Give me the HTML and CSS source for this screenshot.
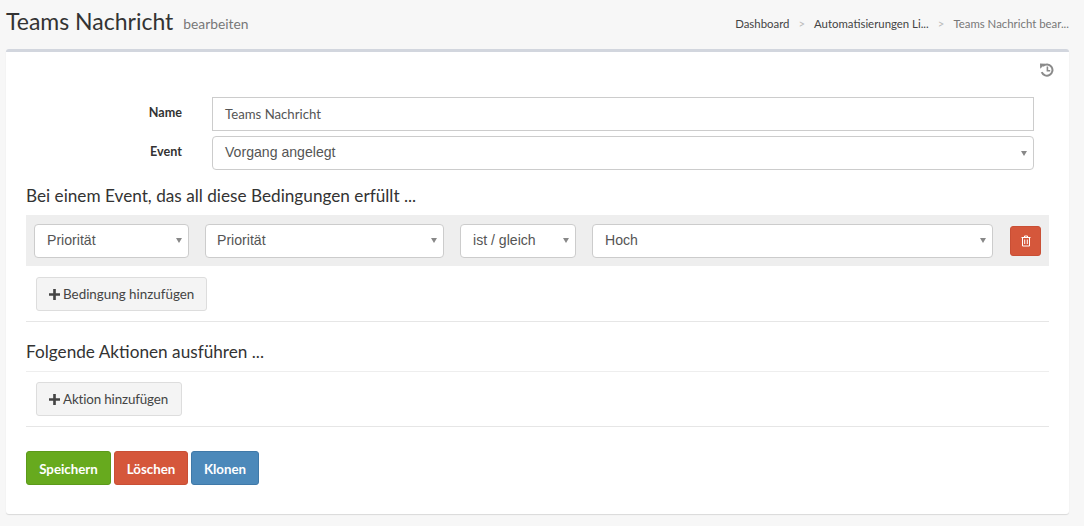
FILE: index.html
```html
<!DOCTYPE html>
<html lang="de">
<head>
<meta charset="utf-8">
<title>Teams Nachricht</title>
<link rel="stylesheet" href="styles.css">
</head>
<body>
<header class="page-head">
  <h1 class="title">Teams Nachricht <small class="subtitle">bearbeiten</small></h1>
  <nav class="crumbs">
    <a>Dashboard</a><span class="sep">&gt;</span><a>Automatisierungen Li...</a><span class="sep">&gt;</span><span class="current">Teams Nachricht bear...</span>
  </nav>
</header>
<main class="card">
  <div class="tools">
    <svg class="history" viewBox="0 0 14 14" width="14" height="14"><path d="M2.9 3.1A5.6 5.6 0 1 1 1.7 9.2" fill="none" stroke="#8a8a8a" stroke-width="2"/><path d="M0 0.6L5.4 0.8 0.2 5.8Z" fill="#8a8a8a"/><path d="M7.4 3.6V7.8H10.2" fill="none" stroke="#8a8a8a" stroke-width="1.6"/></svg>
  </div>
  <div class="form-row first">
    <label class="lbl">Name</label>
    <div class="field input"><span class="input-text">Teams Nachricht</span></div>
  </div>
  <div class="form-row">
    <label class="lbl">Event</label>
    <div class="field select"><span>Vorgang angelegt</span><i class="caret"></i></div>
  </div>
  <h2 class="section first-section">Bei einem Event, das all diese Bedingungen erfüllt ...</h2>
  <div class="cond-row">
    <div class="select s1"><span>Priorität</span><i class="caret"></i></div>
    <div class="select s2"><span>Priorität</span><i class="caret"></i></div>
    <div class="select s3"><span>ist / gleich</span><i class="caret"></i></div>
    <div class="select s4"><span>Hoch</span><i class="caret"></i></div>
    <button class="del">
      <svg viewBox="0 0 10 12" width="10" height="12"><path d="M0.5 2.5H9.5M3.5 2.3V1h3v1.3M1.5 2.5V11h7V2.5M3.7 4.5V9M6.3 4.5V9" fill="none" stroke="#fff" stroke-width="1"/></svg>
    </button>
  </div>
  <div class="add-box bordered">
    <button class="btn-add b1"><svg class="plus" viewBox="0 0 10 10" width="11" height="11"><path d="M3.8 0h2.4v3.8H10v2.4H6.2V10H3.8V6.2H0V3.8h3.8z" fill="#444"/></svg>Bedingung hinzufügen</button>
  </div>
  <h2 class="section second-section">Folgende Aktionen ausführen ...</h2>
  <div class="add-box both">
    <button class="btn-add b2"><svg class="plus" viewBox="0 0 10 10" width="11" height="11"><path d="M3.8 0h2.4v3.8H10v2.4H6.2V10H3.8V6.2H0V3.8h3.8z" fill="#444"/></svg>Aktion hinzufügen</button>
  </div>
  <div class="actions">
    <button class="act green">Speichern</button>
    <button class="act red">Löschen</button>
    <button class="act blue">Klonen</button>
  </div>
</main>
</body>
</html>
```
FILE: styles.css
```css
* { box-sizing: border-box; }
html, body { margin: 0; height: 526px; overflow: hidden; }
body {
  background: #f7f7f7;
  font-family: "Lato", "Open Sans", sans-serif;
  color: #333;
  font-size: 14px;
}
.page-head {
  height: 49px;
  display: flex;
  justify-content: space-between;
  padding: 0 15px 0 6px;
}
.title {
  margin: 7px 0 0;
  font-size: 23px;
  line-height: 28px;
  font-weight: 400;
  color: #333;
}
.subtitle { font-size: 13.8px; color: #777; margin-left: 4px; font-weight: 400; vertical-align: 1px; }
.crumbs {
  margin-top: 16px;
  font-size: 11.4px;
  line-height: 16px;
  color: #444;
  white-space: nowrap;
}
.sep { color: #bbb; margin: 0 9px; }
.current { color: #777; }
.card {
  margin: 0 15px 0 6px;
  height: 465px;
  background: #fff;
  border-top: 3px solid #d2d6de;
  border-radius: 3px;
  box-shadow: 0 1px 1px rgba(0,0,0,.12);
  padding: 0 20px;
}
.tools { height: 45px; display: flex; justify-content: flex-end; padding: 11px 0 0; margin-right: -5px; }
.history { display: block; }
.form-row { display: flex; align-items: center; margin-bottom: 5px; height: 34px; margin-right: 15px; }
.lbl { width: 156px; text-align: right; font-weight: 700; font-size: 12.6px; color: #333; margin-top: -3px; }
.field { margin-left: 30px; flex: 1; }
.input {
  height: 34px;
  border: 1px solid #ccc;
  padding: 0 12px;
  display: flex;
  align-items: center;
  color: #555;
  font-size: 13.2px;
  background: #fff;
}
.select {
  height: 34px;
  border: 1px solid #ccc;
  border-radius: 4px;
  background: #fff;
  padding: 0 12px 2px;
  display: flex;
  align-items: center;
  justify-content: space-between;
  font-family: "Liberation Sans", Arial, sans-serif;
  font-size: 14.1px;
  color: #555;
}
.caret {
  width: 0; height: 0;
  border-left: 3.5px solid transparent;
  border-right: 3.5px solid transparent;
  border-top: 5px solid #888;
  margin: 2px -5.5px 0 0;
}
.section { margin: 0; font-size: 17.2px; font-weight: 400; line-height: 24px; color: #333; }
.first-section { margin-top: 14px; }
.cond-row {
  margin-top: 7px;
  height: 51px;
  background: #eee;
  padding: 0 8px;
  display: flex;
  align-items: center;
}
.s1 { width: 155px; }
.s2 { width: 239px; margin-left: 16px; padding-left: 11px; }
.s3 { width: 116px; margin-left: 16px; }
.s4 { width: 401px; margin-left: 16px; }
.del {
  margin-left: 17px;
  width: 31px; height: 30px;
  background: #d5573b;
  border: 1px solid #c94f35;
  border-radius: 3px;
  padding: 0;
  display: flex; align-items: center; justify-content: center;
}
.add-box { padding: 0 10px; }
.bordered { padding-top: 11px; padding-bottom: 10px; border-bottom: 1px solid #e6e6e6; }
.both { margin-top: 7px; padding-top: 10px; padding-bottom: 10px; border-top: 1px solid #eee; border-bottom: 1px solid #e6e6e6; }
.btn-add {
  height: 34px;
  padding: 0 0 0 12px;
  background: #f4f4f4;
  border: 1px solid #ddd;
  border-radius: 3px;
  font: 400 13.4px "Lato", sans-serif;
  color: #444;
  display: inline-flex;
  align-items: center;
  gap: 3px;
  white-space: nowrap;
}
.b1 { width: 171px; }
.b2 { width: 146px; letter-spacing: -.15px; }
.plus { display: block; }
.second-section { margin-top: 18px; }
.actions { display: flex; gap: 3px; margin-top: 24px; }
.act {
  height: 34px;
  padding: 1px 0 0;
  border-radius: 3px;
  color: #fff;
  font: 700 13.3px "Lato", sans-serif;
  border: 1px solid;
}
.green { width: 85px; background: #67aa1e; border-color: #5c9a1a; }
.red { width: 74px; background: #d5573b; border-color: #c94f35; }
.blue { width: 68px; background: #4c89ba; border-color: #4079a8; }
```
